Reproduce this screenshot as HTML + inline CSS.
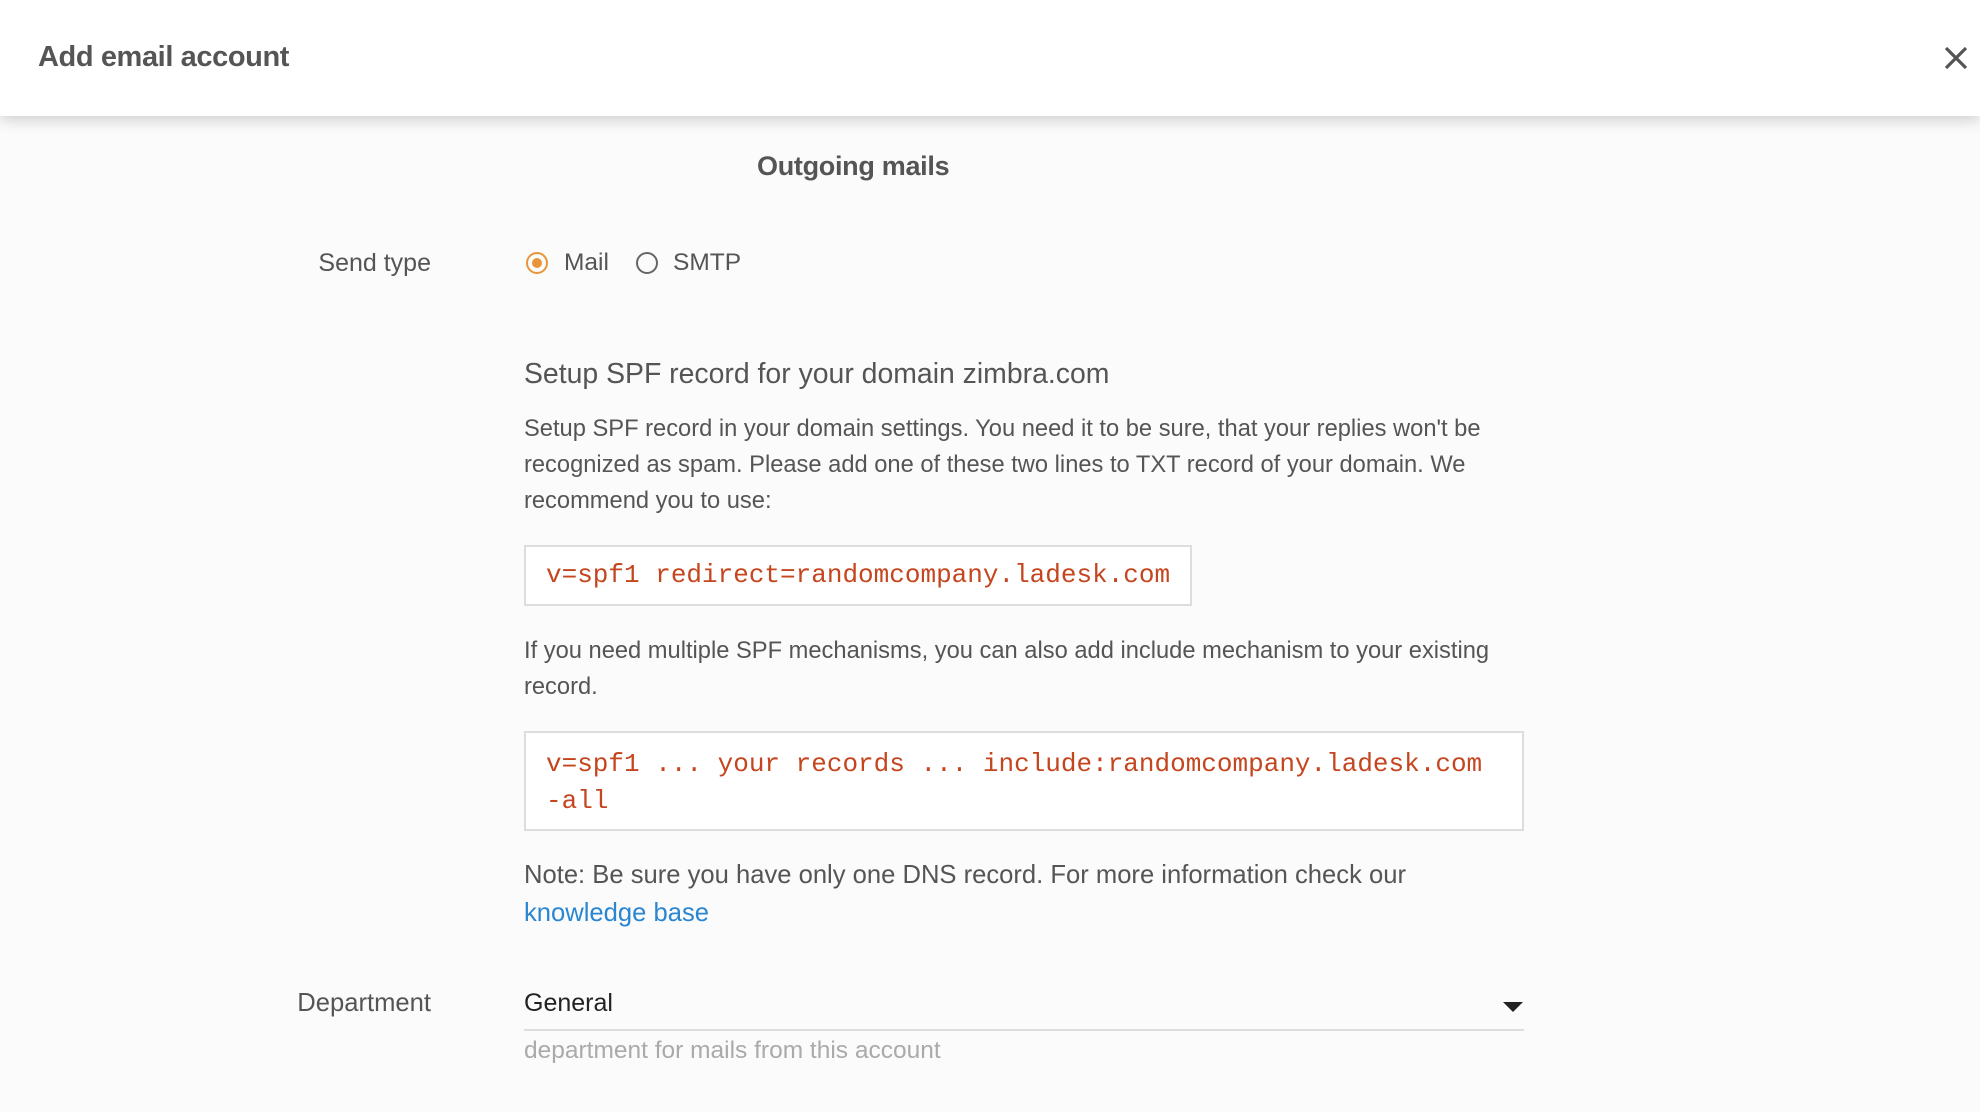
<!DOCTYPE html>
<html><head><meta charset="utf-8"><style>
*{margin:0;padding:0;box-sizing:border-box}
body{width:1980px;height:1112px;overflow:hidden;background:#fbfbfb;font-family:"Liberation Sans",Arial,sans-serif;color:#555;position:relative}
.hdr{position:absolute;left:0;top:0;width:1980px;height:116px;background:#fff;box-shadow:0 4px 14px rgba(0,0,0,.18)}
.a{position:absolute;white-space:nowrap}
.code{position:absolute;border:2px solid #ddd;background:#fff;font-family:"Liberation Mono","Courier New",monospace;color:#c4451e;font-size:26px;padding-left:20px}
.radio{position:absolute;width:22px;height:22px;border-radius:50%}
</style></head><body>
<div class="hdr">
<div class="a" style="left:38px;top:41px;font-size:29px;font-weight:bold;color:#555;letter-spacing:-0.4px">Add email account</div>
<svg class="a" style="left:1944px;top:46px" width="24" height="24" viewBox="0 0 24 24"><path d="M2 2L22 22M22 2L2 22" stroke="#555" stroke-width="3.2"/></svg>
</div>
<div class="a" style="left:757px;top:151px;font-size:27px;font-weight:bold;letter-spacing:-0.3px">Outgoing mails</div>
<div class="a" style="right:1549px;top:249px;font-size:25px">Send type</div>
<div class="radio" style="left:526px;top:252px;border:2.5px solid #e8953a"><div style="position:absolute;left:3.5px;top:3.5px;width:10px;height:10px;border-radius:50%;background:#e8953a"></div></div>
<div class="a" style="left:564px;top:249px;font-size:24.5px">Mail</div>
<div class="radio" style="left:636px;top:252px;border:2.5px solid #666"></div>
<div class="a" style="left:673px;top:249px;font-size:24.5px">SMTP</div>
<div class="a" style="left:524px;top:358px;font-size:28.4px">Setup SPF record for your domain zimbra.com</div>
<div class="a" style="left:524px;top:411px;font-size:23.7px;line-height:36px">Setup SPF record in your domain settings. You need it to be sure, that your replies won't be<br>recognized as spam. Please add one of these two lines to TXT record of your domain. We<br>recommend you to use:</div>
<div class="code" style="left:524px;top:545px;width:668px;height:61px;line-height:57px">v=spf1 redirect=randomcompany.ladesk.com</div>
<div class="a" style="left:524px;top:633px;font-size:23.7px;line-height:36px">If you need multiple SPF mechanisms, you can also add include mechanism to your existing<br>record.</div>
<div class="code" style="left:524px;top:731px;width:1000px;height:100px;line-height:37px;padding-top:13px">v=spf1 ... your records ... include:randomcompany.ladesk.com<br>-all</div>
<div class="a" style="left:524px;top:856px;font-size:25.6px;line-height:38px">Note: Be sure you have only one DNS record. For more information check our<br><span style="color:#2a86d1">knowledge base</span></div>
<div class="a" style="right:1549px;top:989px;font-size:25.6px">Department</div>
<div class="a" style="left:524px;top:989px;font-size:25px;color:#222">General</div>
<svg class="a" style="left:1502px;top:1001px" width="22" height="12" viewBox="0 0 22 12"><path d="M1 1H21L11 11Z" fill="#222"/></svg>
<div class="a" style="left:524px;top:1029px;width:1000px;height:2px;background:#ddd"></div>
<div class="a" style="left:524px;top:1037px;font-size:24.5px;color:#aaa">department for mails from this account</div>
</body></html>
